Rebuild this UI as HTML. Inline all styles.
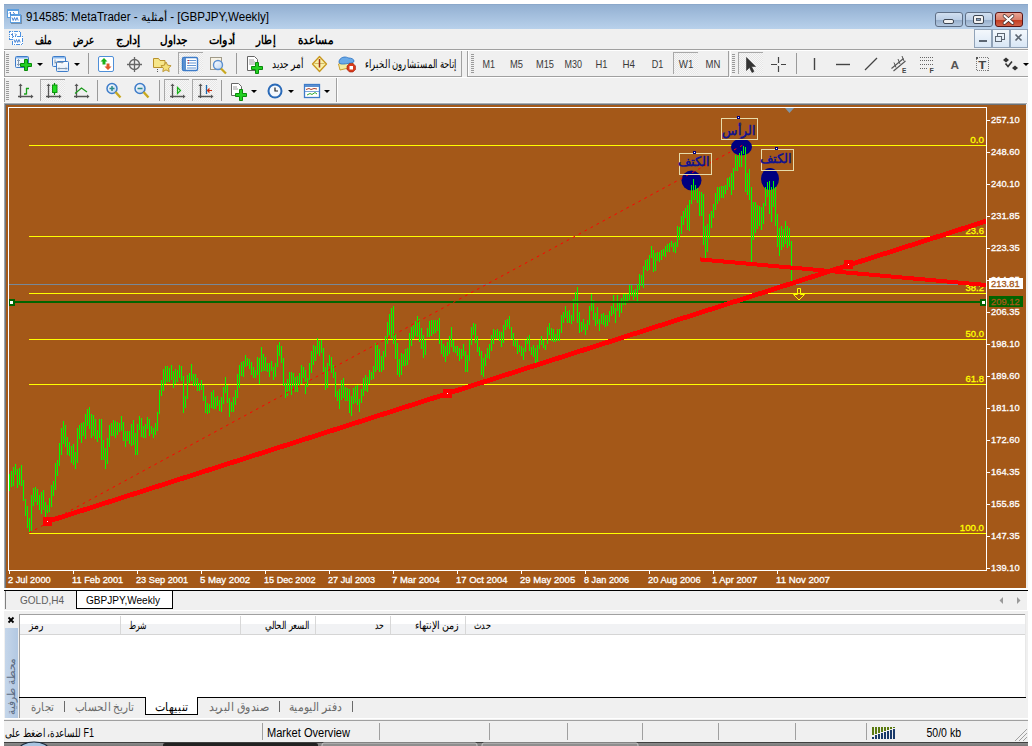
<!DOCTYPE html>
<html><head><meta charset="utf-8">
<style>
*{margin:0;padding:0;box-sizing:border-box}
html,body{width:1032px;height:746px;overflow:hidden;background:#fff;font-family:"Liberation Sans",sans-serif;font-size:12px;color:#000}
.a{position:absolute}
.t{position:absolute;white-space:nowrap;line-height:1}
#title{left:4px;top:4px;width:1024px;height:25px;background:linear-gradient(#93b0d2,#b7d0ea)}
#menu{left:4px;top:29px;width:1024px;height:20px;background:#f0f0f0}
#tb{left:4px;top:49px;width:1024px;height:54px;background:#f0f0f0;border-top:1px solid #a0a0a0}
</style></head><body>
<svg class="a" style="left:0;top:0" width="1032" height="104" viewBox="0 0 1032 104">
<defs>
<linearGradient id="gT" x1="0" y1="0" x2="0" y2="1"><stop offset="0" stop-color="#92afd1"/><stop offset="1" stop-color="#b8d1eb"/></linearGradient>
<linearGradient id="gBtn" x1="0" y1="0" x2="0" y2="1"><stop offset="0" stop-color="#d3e1f1"/><stop offset="0.5" stop-color="#bccfe6"/><stop offset="0.51" stop-color="#93acc9"/><stop offset="1" stop-color="#b6cae2"/></linearGradient>
<linearGradient id="gCls" x1="0" y1="0" x2="0" y2="1"><stop offset="0" stop-color="#eaa898"/><stop offset="0.5" stop-color="#d9806b"/><stop offset="0.51" stop-color="#c2391c"/><stop offset="1" stop-color="#d2664c"/></linearGradient>
<linearGradient id="gMdi" x1="0" y1="0" x2="0" y2="1"><stop offset="0" stop-color="#f4f8fc"/><stop offset="1" stop-color="#d8e6f5"/></linearGradient>
</defs>
<g shape-rendering="crispEdges">
<rect x="4" y="4" width="1024" height="25" fill="url(#gT)"/>
<rect x="4" y="4" width="1024" height="1" fill="#8ba8ca"/>
<rect x="4" y="29" width="1024" height="20" fill="#f0f0f0"/>
<rect x="4" y="49" width="1024" height="1" fill="#a0a0a0"/>
<rect x="4" y="50" width="1024" height="53" fill="#f0f0f0"/>
<rect x="4" y="50" width="1024" height="1" fill="#ffffff"/>
</g>
<!-- title icon -->
<g shape-rendering="crispEdges">
<rect x="7" y="9" width="12" height="9" fill="#5a9ee0"/><rect x="8" y="11" width="10" height="6" fill="#fff"/>
<rect x="10" y="14" width="11" height="9" fill="#5a9ee0"/><rect x="11" y="16" width="9" height="6" fill="#fff"/>
<rect x="11" y="23" width="11" height="1" fill="#7a90a8"/><rect x="21" y="15" width="1" height="8" fill="#7a90a8"/>
</g>
<path d="M9 13.5l1.5-1.5v3M13 12l1.5 1.5-1.5 1" stroke="#3a7ad0" stroke-width="0.9" fill="none"/>
<path d="M12 17.5l1.2 3 1.3-3 1.2 3 1.3-3 1.2 3" stroke="#3a7ad0" stroke-width="0.9" fill="none"/>
<text x="26" y="21" font-family="Liberation Sans" font-size="12" fill="#000" textLength="243" lengthAdjust="spacingAndGlyphs">914585: MetaTrader - أمثلية - [GBPJPY,Weekly]</text>
<!-- caption buttons -->
<rect x="935.5" y="12.5" width="27" height="14" rx="2.5" fill="url(#gBtn)" stroke="#5e6f86"/>
<rect x="943.5" y="19.5" width="10" height="4" rx="1.5" fill="#f2f2f2" stroke="#3d4653"/>
<rect x="965.5" y="12.5" width="27" height="14" rx="2.5" fill="url(#gBtn)" stroke="#5e6f86"/>
<rect x="973.5" y="15.5" width="10" height="8" rx="1.5" fill="#f2f2f2" stroke="#3d4653"/>
<rect x="976.5" y="18.5" width="4" height="2" fill="#8aa4c4" stroke="#3d4653" stroke-width="0.8"/>
<rect x="995.5" y="12.5" width="27" height="14" rx="2.5" fill="url(#gCls)" stroke="#5a1414"/>
<path d="M1004.5 16l8 7M1012.5 16l-8 7" stroke="#3a2a2a" stroke-width="3.6" stroke-linecap="round"/>
<path d="M1004.5 16l8 7M1012.5 16l-8 7" stroke="#fff" stroke-width="2.2" stroke-linecap="round"/>
<!-- MDI buttons -->
<g shape-rendering="crispEdges">
<rect x="974.5" y="29.5" width="17" height="18" fill="url(#gMdi)" stroke="#91a3b8"/>
<rect x="992.5" y="29.5" width="17" height="18" fill="url(#gMdi)" stroke="#91a3b8"/>
<rect x="1010.5" y="29.5" width="17" height="18" fill="url(#gMdi)" stroke="#91a3b8"/>
<rect x="979" y="40" width="8" height="2" fill="#5c6672"/>
<rect x="995.5" y="36.5" width="6" height="5" fill="none" stroke="#5c6672"/>
<path d="M997.5 36.5V33.5H1004.5V39.5H1001.5" fill="none" stroke="#5c6672"/>
</g>
<path d="M1015.5 34.5l6 6M1021.5 34.5l-6 6" stroke="#5c6672" stroke-width="1.6"/>
<!-- menu -->
<rect x="9.5" y="31.5" width="11" height="8" fill="#fff" stroke="#4a90e0" stroke-dasharray="1.5 0.8" shape-rendering="crispEdges"/>
<path d="M11 35l1.5-1.5v3M15 33.5l1.5 1.5-1.5 1" stroke="#3a7ad0" stroke-width="0.9" fill="none"/>
<rect x="12.5" y="36.5" width="10" height="8" fill="#fff" stroke="#4a90e0" stroke-dasharray="1.5 0.8" shape-rendering="crispEdges"/>
<path d="M14 39.5l1.2 3 1.3-3 1.2 3 1.3-3 1.2 3" stroke="#3a7ad0" stroke-width="0.9" fill="none"/>
<g font-family="Liberation Sans" font-size="12" font-weight="bold" fill="#000" lengthAdjust="spacingAndGlyphs">
<text x="35" y="44" textLength="16" lengthAdjust="spacingAndGlyphs">ملف</text>
<text x="73" y="44" textLength="21" lengthAdjust="spacingAndGlyphs">عرض</text>
<text x="116" y="44" textLength="24" lengthAdjust="spacingAndGlyphs">إدارج</text>
<text x="160" y="44" textLength="27" lengthAdjust="spacingAndGlyphs">جداول</text>
<text x="209" y="44" textLength="26" lengthAdjust="spacingAndGlyphs">أدوات</text>
<text x="256" y="44" textLength="19" lengthAdjust="spacingAndGlyphs">إطار</text>
<text x="298" y="44" textLength="35" lengthAdjust="spacingAndGlyphs">مساعدة</text>
</g>
<defs>
<pattern id="chk" width="2" height="2" patternUnits="userSpaceOnUse"><rect width="2" height="2" fill="#f7f7f7"/><rect width="1" height="1" fill="#e6e6e6"/><rect x="1" y="1" width="1" height="1" fill="#e6e6e6"/></pattern>
<linearGradient id="gBlueWin" x1="0" y1="0" x2="0" y2="1"><stop offset="0" stop-color="#ffffff"/><stop offset="1" stop-color="#dfeaf7"/></linearGradient>
<linearGradient id="gLens" x1="0" y1="0" x2="1" y2="1"><stop offset="0" stop-color="#ffffff"/><stop offset="1" stop-color="#bcd4ee"/></linearGradient>
</defs>
<!-- toolbar band borders -->
<g shape-rendering="crispEdges">
<!-- row 1 group 1 -->
<rect x="4" y="76" width="458" height="1" fill="#a0a0a0"/>
<rect x="461" y="51" width="1" height="26" fill="#a0a0a0"/>
<rect x="4" y="51" width="1" height="26" fill="#a0a0a0"/>
<!-- row 1 group 2 -->
<rect x="467" y="51" width="1" height="26" fill="#a0a0a0"/>
<rect x="468" y="51" width="1" height="25" fill="#ffffff"/>
<rect x="467" y="76" width="262" height="1" fill="#a0a0a0"/>
<rect x="728" y="51" width="1" height="26" fill="#a0a0a0"/>
<!-- row 1 group 3 -->
<rect x="730" y="51" width="1" height="25" fill="#ffffff"/>
<rect x="730" y="76" width="298" height="1" fill="#a0a0a0"/>
<rect x="4" y="77" width="1024" height="1" fill="#ffffff"/>
<!-- row 2 -->
<rect x="4" y="78" width="1" height="24" fill="#a0a0a0"/>
<rect x="336" y="78" width="1" height="24" fill="#a0a0a0"/>
<rect x="337" y="78" width="1" height="24" fill="#ffffff"/>
<rect x="4" y="102" width="1024" height="1" fill="#f6f6f6"/>
<!-- grips -->
<g fill="#9a9a9a">
<rect x="6" y="54" width="3" height="1"/><rect x="6" y="56" width="3" height="1"/><rect x="6" y="58" width="3" height="1"/><rect x="6" y="60" width="3" height="1"/><rect x="6" y="62" width="3" height="1"/><rect x="6" y="64" width="3" height="1"/><rect x="6" y="66" width="3" height="1"/><rect x="6" y="68" width="3" height="1"/><rect x="6" y="70" width="3" height="1"/><rect x="6" y="72" width="3" height="1"/>
<rect x="471" y="54" width="3" height="1"/><rect x="471" y="56" width="3" height="1"/><rect x="471" y="58" width="3" height="1"/><rect x="471" y="60" width="3" height="1"/><rect x="471" y="62" width="3" height="1"/><rect x="471" y="64" width="3" height="1"/><rect x="471" y="66" width="3" height="1"/><rect x="471" y="68" width="3" height="1"/><rect x="471" y="70" width="3" height="1"/><rect x="471" y="72" width="3" height="1"/>
<rect x="732" y="54" width="3" height="1"/><rect x="732" y="56" width="3" height="1"/><rect x="732" y="58" width="3" height="1"/><rect x="732" y="60" width="3" height="1"/><rect x="732" y="62" width="3" height="1"/><rect x="732" y="64" width="3" height="1"/><rect x="732" y="66" width="3" height="1"/><rect x="732" y="68" width="3" height="1"/><rect x="732" y="70" width="3" height="1"/><rect x="732" y="72" width="3" height="1"/>
<rect x="6" y="81" width="3" height="1"/><rect x="6" y="83" width="3" height="1"/><rect x="6" y="85" width="3" height="1"/><rect x="6" y="87" width="3" height="1"/><rect x="6" y="89" width="3" height="1"/><rect x="6" y="91" width="3" height="1"/><rect x="6" y="93" width="3" height="1"/><rect x="6" y="95" width="3" height="1"/><rect x="6" y="97" width="3" height="1"/><rect x="6" y="99" width="3" height="1"/>
</g>
<!-- separators -->
<g fill="#9a9a9a">
<rect x="88" y="53" width="1" height="21"/>
<rect x="236" y="53" width="1" height="21"/>
<rect x="796" y="53" width="1" height="21"/>
<rect x="97" y="80" width="1" height="21"/>
<rect x="159" y="80" width="1" height="21"/>
<rect x="221" y="80" width="1" height="21"/>
</g>
<!-- pressed boxes -->
<rect x="178" y="52" width="25" height="22" fill="url(#chk)"/><rect x="178" y="52" width="25" height="1" fill="#a8a8a8"/><rect x="178" y="52" width="1" height="22" fill="#a8a8a8"/>
<rect x="673" y="52" width="25" height="22" fill="url(#chk)"/><rect x="673" y="52" width="25" height="1" fill="#a8a8a8"/><rect x="673" y="52" width="1" height="22" fill="#a8a8a8"/>
<rect x="738" y="52" width="25" height="22" fill="url(#chk)"/><rect x="738" y="52" width="25" height="1" fill="#a8a8a8"/><rect x="738" y="52" width="1" height="22" fill="#a8a8a8"/>
<rect x="40" y="79" width="25" height="22" fill="url(#chk)"/><rect x="40" y="79" width="25" height="1" fill="#a8a8a8"/><rect x="40" y="79" width="1" height="22" fill="#a8a8a8"/>
<rect x="164" y="79" width="25" height="22" fill="url(#chk)"/><rect x="164" y="79" width="25" height="1" fill="#a8a8a8"/><rect x="164" y="79" width="1" height="22" fill="#a8a8a8"/>
<rect x="192" y="79" width="25" height="22" fill="url(#chk)"/><rect x="192" y="79" width="25" height="1" fill="#a8a8a8"/><rect x="192" y="79" width="1" height="22" fill="#a8a8a8"/>
</g>
<!-- dropdown arrows -->
<g fill="#000">
<path d="M37 63h6l-3 3z"/><path d="M74 63h6l-3 3z"/>
<path d="M251 90h6l-3 3z"/><path d="M288 90h6l-3 3z"/><path d="M324 90h6l-3 3z"/>
<path d="M1023 63h6l-3 3z"/>
</g>
<!-- ROW1 icons -->
<!-- new chart -->
<rect x="15.5" y="56.5" width="13" height="11" rx="1" fill="url(#gBlueWin)" stroke="#3d7cc9"/>
<rect x="16" y="57" width="12" height="1.5" fill="#8ab8ec"/>
<path d="M18.5 59.5v6M17 61l1.5-1.5 1.5 1.5M17 64l1.5 1.5 1.5-1.5" stroke="#7890a8" stroke-width="0.9" fill="none"/>
<path d="M24.5 59.5h3v4h4v3h-4v4h-3v-4h-4v-3h4z" fill="#22d022" stroke="#0a8a0a"/>
<!-- profiles -->
<rect x="52.5" y="56.5" width="13" height="10" rx="1" fill="url(#gBlueWin)" stroke="#3d7cc9"/>
<rect x="53" y="57" width="12" height="1.5" fill="#8ab8ec"/>
<rect x="56.5" y="61.5" width="12" height="10" rx="1" fill="url(#gBlueWin)" stroke="#3d7cc9"/>
<path d="M55 59.5v4M55 62.5h8M62 61.5l1 1-1 1" stroke="#7890a8" stroke-width="0.9" fill="none"/>
<path d="M58 68.5h9M59 67.5l-1 1 1 1M66 67.5l1 1-1 1" stroke="#7890a8" stroke-width="0.9" fill="none"/>
<!-- market watch -->
<rect x="98.5" y="56.5" width="15" height="15" rx="1.5" fill="#fff" stroke="#4f8fd8"/>
<path d="M104 58l3.5 3.5h-2v3h-3v-3h-2z" fill="#1ab01a"/>
<path d="M108 70l-3.5-3.5h2v-3h3v3h2z" fill="#e0562a"/>
<!-- data window crosshair -->
<circle cx="134.5" cy="64.5" r="5" fill="none" stroke="#666" stroke-width="1.3"/>
<path d="M134.5 57v15M127 64.5h15" stroke="#666" stroke-width="1.3"/>
<!-- folder star -->
<path d="M153.5 58.5h5l1.5 2h5v7h-11.5z" fill="#f6e68a" stroke="#b8902a"/>
<path d="M166 62l1.6 3.2 3.5.5-2.5 2.4.6 3.5-3.2-1.7-3.2 1.7.6-3.5-2.5-2.4 3.5-.5z" fill="#f4e07a" stroke="#b8902a" stroke-width="0.9"/>
<path d="M157.5 69v4" stroke="#555" stroke-dasharray="1 1"/>
<!-- navigator -->
<rect x="182.5" y="57.5" width="15" height="13" rx="1.5" fill="#fff" stroke="#3d7cc9" stroke-width="1.4"/>
<rect x="183" y="58" width="3" height="12" fill="#5a8fd0"/>
<path d="M187 60.5h9M187 63h9M187 65.5h9M187 68h9" stroke="#3d7cc9" stroke-width="0.8"/>
<path d="M188 60.5h1M188 63h1" stroke="#e02020"/>
<!-- tester -->
<rect x="210.5" y="57.5" width="11" height="12" fill="#f7f2e4" stroke="#a09a88"/>
<circle cx="218" cy="65" r="4.5" fill="url(#gLens)" stroke="#5a8fd0" stroke-width="1.4"/>
<path d="M221 68.5l5 5" stroke="#c8a820" stroke-width="2.2"/>
<!-- new order -->
<path d="M247.5 56.5h7l3 3v11h-10z" fill="#fff" stroke="#666"/>
<path d="M249 60h5M249 62h6M249 64h6" stroke="#888" stroke-width="0.8"/>
<path d="M255.5 62.5h3v4h4v3h-4v4h-3v-4h-4v-3h4z" fill="#22d022" stroke="#0a8a0a"/>
<!-- metaeditor diamond -->
<path d="M319.5 56.5l7 7.5-7 7.5-7-7.5z" fill="#f7f0a8" stroke="#c8961e" stroke-width="1.3" stroke-linejoin="round"/>
<path d="M314.5 63.5h10" stroke="#c8a850" stroke-width="0.8"/>
<path d="M319.5 59v8.5" stroke="#a03418" stroke-width="1.5"/>
<!-- experts -->
<path d="M340 70l-1.5-6 8-3.5 6.5 2.5v4z" fill="#f4eda0" stroke="#c8961e" stroke-width="0.9" stroke-linejoin="round"/>
<path d="M339 62c0-3 3-5 6-5 2 0 3 1 4 1 2 0 5 1 5 3 0 2-3 2-6 2.5-3 .5-9 1.5-9-1.5z" fill="#6aaae8" stroke="#2a70c0" stroke-width="0.8"/>
<path d="M349.5 63.5h3.5l2.5 2.5v3.5l-2.5 2.5h-3.5l-2.5-2.5v-3.5z" fill="#d83a1a" stroke="#a02010" stroke-width="0.6"/>
<rect x="349.5" y="66" width="3.5" height="3.5" fill="#fff"/>
<!-- row1 texts -->
<g font-family="Liberation Sans" font-size="11.5" fill="#000">
<text x="272" y="68" textLength="31" lengthAdjust="spacingAndGlyphs">أمر جديد</text>
<text x="365" y="68" textLength="91" lengthAdjust="spacingAndGlyphs">إتاحة المستشارون الخبراء</text>
</g>
<g font-family="Liberation Sans" font-size="11" fill="#3a3a3a">
<text x="482.5" y="68" textLength="12.5" lengthAdjust="spacingAndGlyphs">M1</text>
<text x="510" y="68" textLength="13" lengthAdjust="spacingAndGlyphs">M5</text>
<text x="536" y="68" textLength="18" lengthAdjust="spacingAndGlyphs">M15</text>
<text x="564.5" y="68" textLength="17.5" lengthAdjust="spacingAndGlyphs">M30</text>
<text x="595.5" y="68" textLength="12" lengthAdjust="spacingAndGlyphs">H1</text>
<text x="622.5" y="68" textLength="12.5" lengthAdjust="spacingAndGlyphs">H4</text>
<text x="651.8" y="68" textLength="11.6" lengthAdjust="spacingAndGlyphs">D1</text>
<text x="678.8" y="68" textLength="14.6" lengthAdjust="spacingAndGlyphs">W1</text>
<text x="705.6" y="68" textLength="14.8" lengthAdjust="spacingAndGlyphs">MN</text>
</g>
<!-- group 3 icons -->
<path d="M746.5 57.5v13l3-3 2.5 5 2-1-2.5-5h4z" fill="#333" stroke="#333" stroke-width="0.6" stroke-linejoin="round"/>
<path d="M778.5 57v15M771 64.5h15" stroke="#444" stroke-width="1.2"/>
<rect x="778" y="63" width="2" height="3" fill="#f0f0f0"/><rect x="777" y="64" width="4" height="1" fill="#f0f0f0"/>
<path d="M814.5 58v12" stroke="#444" stroke-width="1.4"/>
<path d="M836 64.5h14" stroke="#444" stroke-width="1.4"/>
<path d="M865 70l12-12" stroke="#444" stroke-width="1.2"/>
<path d="M891.5 68.5l12-10M893.5 71l12-10" stroke="#555" stroke-width="1.1" fill="none"/>
<path d="M894 62.5l2 5M898 59l2 5M902 56l2 5" stroke="#555" stroke-width="1" fill="none"/>
<text x="902" y="72.5" font-family="Liberation Sans" font-size="6.5" font-weight="bold" fill="#444">E</text>
<g fill="#666" shape-rendering="crispEdges">
<rect x="920" y="57" width="1" height="1"/><rect x="922" y="57" width="1" height="1"/><rect x="924" y="57" width="1" height="1"/><rect x="926" y="57" width="1" height="1"/><rect x="928" y="57" width="1" height="1"/><rect x="930" y="57" width="1" height="1"/><rect x="932" y="57" width="1" height="1"/>
<rect x="920" y="60" width="1" height="1"/><rect x="922" y="60" width="1" height="1"/><rect x="924" y="60" width="1" height="1"/><rect x="926" y="60" width="1" height="1"/><rect x="928" y="60" width="1" height="1"/><rect x="930" y="60" width="1" height="1"/><rect x="932" y="60" width="1" height="1"/>
<rect x="920" y="64" width="1" height="1"/><rect x="922" y="64" width="1" height="1"/><rect x="924" y="64" width="1" height="1"/><rect x="926" y="64" width="1" height="1"/><rect x="928" y="64" width="1" height="1"/><rect x="930" y="64" width="1" height="1"/><rect x="932" y="64" width="1" height="1"/>
<rect x="920" y="68" width="1" height="1"/><rect x="922" y="68" width="1" height="1"/><rect x="924" y="68" width="1" height="1"/><rect x="926" y="68" width="1" height="1"/>
</g>
<text x="929.5" y="72.5" font-family="Liberation Sans" font-size="7" font-weight="bold" fill="#444">F</text>
<text x="950.5" y="68.7" font-family="Liberation Sans" font-size="11" font-weight="bold" fill="#555" textLength="8.5" lengthAdjust="spacingAndGlyphs">A</text>
<rect x="976.5" y="57.5" width="12" height="13" fill="none" stroke="#777" stroke-dasharray="1 1" shape-rendering="crispEdges"/>
<rect x="975.5" y="56.5" width="2" height="2" fill="#555" shape-rendering="crispEdges"/>
<text x="978.3" y="68.7" font-family="Liberation Sans" font-size="11" font-weight="bold" fill="#444" textLength="8" lengthAdjust="spacingAndGlyphs">T</text>
<path d="M1006 57.5l3 2.5-3 2.5-3-2.5z" fill="#333"/>
<path d="M1015 65.5l3 2.5-3 2.5-3-2.5z" fill="#333"/>
<path d="M1005.5 63.5l2.5 3 4-5" stroke="#333" stroke-width="1.6" fill="none"/>
<!-- ROW2 icons -->
<g stroke="#555" stroke-width="1.3" fill="none">
<path d="M20.5 85v13M18 96.5h14"/><path d="M48.5 85v13M46 96.5h14"/><path d="M76.5 85v13M74 96.5h14"/>
<path d="M172.5 85v13M170 96.5h14"/><path d="M200.5 85v13M198 96.5h14"/>
</g>
<g fill="#555"><path d="M18.5 86l2-2.5 2 2.5z"/><path d="M31 94.5l2.5 2-2.5 2z"/><path d="M46.5 86l2-2.5 2 2.5z"/><path d="M59 94.5l2.5 2-2.5 2z"/><path d="M74.5 86l2-2.5 2 2.5z"/><path d="M87 94.5l2.5 2-2.5 2z"/><path d="M170.5 86l2-2.5 2 2.5z"/><path d="M183 94.5l2.5 2-2.5 2z"/><path d="M198.5 86l2-2.5 2 2.5z"/><path d="M211 94.5l2.5 2-2.5 2z"/></g>
<path d="M26.5 88v6.5M26 88.5h3M24 94h2.5" stroke="#18a018" stroke-width="1.3" fill="none"/>
<path d="M54.5 83v12" stroke="#0a8a0a" stroke-width="1.2"/><rect x="52.5" y="85" width="4.5" height="7.5" fill="#22dd22" stroke="#0a8a0a" stroke-width="0.9"/>
<path d="M75 93.5l6.5-5.5 5.5 4" stroke="#1a9a1a" stroke-width="1.2" fill="none"/>
<circle cx="112" cy="88.5" r="5" fill="url(#gLens)" stroke="#3d7cc9" stroke-width="1.5"/>
<path d="M109.5 88.5h5M112 86v5" stroke="#2a8a8a" stroke-width="1.5"/>
<path d="M115.5 92l5 5.5" stroke="#c8a820" stroke-width="2.4"/>
<circle cx="140" cy="88.5" r="5" fill="url(#gLens)" stroke="#3d7cc9" stroke-width="1.5"/>
<path d="M137.5 88.5h5" stroke="#2a8a8a" stroke-width="1.5"/>
<path d="M143.5 92l5 5.5" stroke="#c8a820" stroke-width="2.4"/>
<path d="M177.5 87.5l3 3-3 3z" fill="none" stroke="#1ab01a" stroke-width="1.2"/>
<path d="M206.5 85v9" stroke="#1a6ab0" stroke-width="1.3"/><path d="M212 90.5h-4M209.5 88.5l-2 2 2 2" stroke="#d03010" stroke-width="1.2" fill="none"/>
<path d="M231.5 83.5h7l3 3v9h-10z" fill="#fff" stroke="#666"/>
<path d="M233 87h4M233 89h5" stroke="#888" stroke-width="0.8"/>
<path d="M239.5 89.5h3v4h4v3h-4v4h-3v-4h-4v-3h4z" fill="#22d022" stroke="#0a8a0a"/>
<circle cx="275" cy="91" r="7.5" fill="#2a6ab8"/><circle cx="275" cy="91" r="5.5" fill="#f4f8fc"/>
<path d="M275 87.5v3.5h3" stroke="#222" stroke-width="1.2" fill="none"/>
<rect x="304.5" y="84.5" width="15" height="13" fill="#fff" stroke="#3d7cc9" stroke-width="1.3"/>
<rect x="305" y="85" width="14" height="2" fill="#5a8fd0"/>
<path d="M305 91.5h14" stroke="#5a8fd0" stroke-width="0.8"/>
<path d="M306 89.5l3-1 2 1 3-1 3 .5" stroke="#a02a10" stroke-width="0.9" fill="none"/>
<path d="M307 95l3-1.5 2 1 3-2 2 1.5" stroke="#18a018" stroke-width="0.9" fill="none"/>

</svg>

<svg class="a" style="left:0;top:0" width="1032" height="746" viewBox="0 0 1032 746">
<style>
.pl{font-family:"Liberation Sans",sans-serif;font-size:9.5px;fill:#fff;stroke:#fff;stroke-width:0.3px}
.dl{font-family:"Liberation Sans",sans-serif;font-size:9.5px;fill:#fff;stroke:#fff;stroke-width:0.3px}
.fl{font-family:"Liberation Sans",sans-serif;font-size:9.5px;fill:#ffff00;stroke:#ffff00;stroke-width:0.3px;text-anchor:end}
</style>
<defs><clipPath id="fr"><rect x="9" y="108" width="977" height="462"/></clipPath></defs>
<g shape-rendering="crispEdges">
<rect x="4" y="104" width="1022" height="484" fill="#a45818"/>
<rect x="4" y="103" width="1023" height="1" fill="#a9adb1"/>
<rect x="4" y="104" width="1023" height="1" fill="#6b7177"/>
<rect x="4" y="104" width="1" height="484" fill="#a0a5aa"/>
<rect x="5" y="105" width="1" height="483" fill="#6e767e"/>
<rect x="1026" y="104" width="2" height="484" fill="#f0f0f0"/>
<rect x="8.5" y="107.5" width="978" height="463" fill="none" stroke="#fff"/>
<g fill="#ffff00">
<rect x="29" y="145" width="957" height="1"/>
<rect x="29" y="236" width="957" height="1"/>
<rect x="29" y="293" width="957" height="1"/>
<rect x="29" y="339" width="957" height="1"/>
<rect x="29" y="384" width="957" height="1"/>
<rect x="29" y="533" width="957" height="1"/>
</g>
</g>
<g fill="#000080">
<ellipse cx="691.5" cy="180.5" rx="10" ry="10"/>
<ellipse cx="741.5" cy="147" rx="10.5" ry="8.5"/>
<ellipse cx="770" cy="179" rx="9" ry="11"/>
</g>
<g shape-rendering="crispEdges">
<rect x="9" y="284" width="977" height="1" fill="#778899"/>
<path d="M9.5 474V491M11.5 471V487M13.5 467V486M15.5 464V475M17.5 469V488M19.5 468V485M21.5 465V486M23.5 480V501M25.5 499V516M27.5 506V528M29.5 518V533M31.5 495V531M33.5 488V506M35.5 487V502M37.5 489V505M39.5 495V510M41.5 492V514M43.5 490V510M45.5 502V517M47.5 505V513M49.5 498V512M51.5 485V507M53.5 481V496M55.5 463V490M57.5 460V476M59.5 443V466M61.5 428V455M63.5 421V444M65.5 425V447M67.5 437V455M69.5 442V456M71.5 446V463M73.5 444V465M75.5 452V469M77.5 428V463M79.5 425V439M81.5 423V443M83.5 422V436M85.5 414V439M87.5 409V426M89.5 407V429M91.5 414V438M93.5 415V436M95.5 419V439M97.5 430V442M99.5 419V438M101.5 419V460M103.5 440V460M105.5 448V469M107.5 438V464M109.5 425V447M111.5 423V436M113.5 420V436M115.5 421V438M117.5 422V435M119.5 423V432M121.5 416V431M123.5 422V441M125.5 431V447M127.5 431V441M129.5 431V444M131.5 424V446M133.5 420V445M135.5 433V455M137.5 424V455M139.5 416V430M141.5 418V437M143.5 426V438M145.5 424V438M147.5 417V429M149.5 419V436M151.5 426V434M153.5 428V438M155.5 423V435M157.5 412V431M159.5 390V414M161.5 380V396M163.5 369V391M165.5 366V384M167.5 366V382M169.5 368V382M171.5 365V380M173.5 371V388M175.5 369V384M177.5 370V382M179.5 365V378M181.5 366V381M183.5 376V413M185.5 396V408M187.5 375V399M189.5 373V383M191.5 364V381M193.5 374V386M195.5 374V386M197.5 378V391M199.5 383V391M201.5 380V390M203.5 385V401M205.5 396V413M207.5 403V414M209.5 404V413M211.5 392V408M213.5 390V409M215.5 397V409M217.5 396V406M219.5 400V411M221.5 397V412M223.5 387V404M225.5 377V393M227.5 385V403M229.5 398V417M231.5 402V412M233.5 397V412M235.5 390V405M237.5 374V398M239.5 365V388M241.5 362V376M243.5 361V377M245.5 355V367M247.5 358V366M249.5 359V369M251.5 362V375M253.5 367V378M255.5 370V378M257.5 357V375M259.5 358V384M261.5 347V372M263.5 354V371M265.5 357V371M267.5 363V372M269.5 363V377M271.5 361V371M273.5 367V380M275.5 363V377M277.5 345V367M279.5 342V356M281.5 346V363M283.5 358V386M285.5 383V398M287.5 379V396M289.5 372V391M291.5 372V395M293.5 373V386M295.5 377V392M297.5 376V392M299.5 373V387M301.5 365V384M303.5 367V378M305.5 370V394M307.5 378V387M309.5 363V380M311.5 351V373M313.5 345V365M315.5 346V361M317.5 338V354M319.5 341V356M321.5 340V353M323.5 348V372M325.5 367V390M327.5 363V388M329.5 355V366M331.5 357V373M333.5 365V378M335.5 372V397M337.5 391V401M339.5 389V409M341.5 380V400M343.5 378V398M345.5 387V401M347.5 388V401M349.5 389V413M351.5 396V416M353.5 388V404M355.5 386V403M357.5 385V405M359.5 399V412M361.5 389V403M363.5 378V396M365.5 375V391M367.5 377V392M369.5 370V384M371.5 372V380M373.5 366V379M375.5 343V372M377.5 345V370M379.5 349V372M381.5 356V372M383.5 351V370M385.5 336V357M387.5 322V344M389.5 314V335M391.5 308V338M393.5 306V344M395.5 333V359M397.5 343V375M399.5 359V377M401.5 353V375M403.5 354V366M405.5 349V366M407.5 348V365M409.5 333V360M411.5 327V346M413.5 325V339M415.5 321V336M417.5 316V337M419.5 319V342M421.5 328V349M423.5 335V358M425.5 340V355M427.5 328V337M429.5 321V337M431.5 320V336M433.5 320V334M435.5 320V333M437.5 320V331M439.5 318V344M441.5 340V354M443.5 344V357M445.5 346V362M447.5 342V356M449.5 336V354M451.5 327V347M453.5 340V352M455.5 346V353M457.5 346V356M459.5 348V361M461.5 349V359M463.5 344V356M465.5 351V372M467.5 355V372M469.5 340V361M471.5 327V345M473.5 323V335M475.5 324V343M477.5 336V352M479.5 347V356M481.5 351V375M483.5 358V377M485.5 354V366M487.5 348V358M489.5 344V359M491.5 335V351M493.5 329V344M495.5 330V338M497.5 329V339M499.5 331V341M501.5 332V347M503.5 325V343M505.5 320V330M507.5 319V327M509.5 316V329M511.5 327V339M513.5 333V346M515.5 340V347M517.5 340V354M519.5 345V352M521.5 346V356M523.5 348V360M525.5 340V352M527.5 337V344M529.5 335V351M531.5 347V355M533.5 345V357M535.5 348V363M537.5 345V362M539.5 340V349M541.5 336V345M543.5 340V348M545.5 345V350M547.5 327V344M549.5 323V335M551.5 328V341M553.5 329V342M555.5 334V342M557.5 329V341M559.5 329V341M561.5 315V333M563.5 312V323M565.5 306V318M567.5 311V323M569.5 310V323M571.5 315V324M573.5 299V321M575.5 292V304M577.5 287V323M579.5 312V333M581.5 322V332M583.5 319V330M585.5 324V335M587.5 320V330M589.5 306V325M591.5 294V311M593.5 300V320M595.5 313V326M597.5 307V324M599.5 319V331M601.5 314V324M603.5 313V325M605.5 315V327M607.5 315V326M609.5 311V322M611.5 306V316M613.5 295V314M615.5 308V323M617.5 295V311M619.5 302V317M621.5 298V313M623.5 294V305M625.5 294V305M627.5 294V301M629.5 285V300M631.5 285V296M633.5 290V300M635.5 289V297M637.5 284V301M639.5 274V290M641.5 275V286M643.5 266V288M645.5 260V270M647.5 259V271M649.5 255V270M651.5 246V258M653.5 250V272M655.5 253V271M657.5 252V261M659.5 252V262M661.5 250V260M663.5 249V256M665.5 246V257M667.5 244V252M669.5 243V252M671.5 241V247M673.5 243V252M675.5 242V253M677.5 226V247M679.5 227V240M681.5 216V234M683.5 211V225M685.5 208V218M687.5 205V230M689.5 200V231M691.5 185V204M693.5 179V200M695.5 185V200M697.5 188V203M699.5 191V216M701.5 192V216M703.5 194V245M705.5 226V258M707.5 224V252M709.5 214V239M711.5 211V228M713.5 204V218M715.5 193V210M717.5 187V204M719.5 187V201M721.5 186V198M723.5 186V198M725.5 185V194M727.5 178V190M729.5 177V187M731.5 173V195M733.5 168V190M735.5 155V171M737.5 156V171M739.5 153V167M741.5 151V167M743.5 146V154M745.5 147V192M747.5 173V195M749.5 169V200M751.5 187V262M753.5 202V240M755.5 202V233M757.5 205V229M759.5 206V226M761.5 207V230M763.5 203V224M765.5 187V206M767.5 182V197M769.5 181V214M771.5 187V222M773.5 181V207M775.5 187V226M777.5 214V247M779.5 228V256M781.5 226V250M783.5 229V247M785.5 221V244M787.5 226V248M789.5 228V246M791.5 241V286" stroke="#00ff00" stroke-width="1" fill="none"/>
<rect x="9" y="301" width="977" height="2" fill="#006400"/>
<rect x="9" y="299" width="6" height="7" fill="#006400"/><rect x="10" y="301" width="3" height="3" fill="#fff"/>
<rect x="980" y="299" width="6" height="7" fill="#006400"/><rect x="982" y="301" width="3" height="3" fill="#fff"/>
</g>
<g>
<text x="984" y="143" class="fl" textLength="13.8" lengthAdjust="spacingAndGlyphs">0.0</text>
<text x="984" y="234" class="fl" textLength="18.4" lengthAdjust="spacingAndGlyphs">23.6</text>
<text x="984" y="291" class="fl" textLength="18.4" lengthAdjust="spacingAndGlyphs">38.2</text>
<text x="984" y="337" class="fl" textLength="18.4" lengthAdjust="spacingAndGlyphs">50.0</text>
<text x="984" y="382" class="fl" textLength="18.4" lengthAdjust="spacingAndGlyphs">61.8</text>
<text x="984" y="531" class="fl" textLength="24.2" lengthAdjust="spacingAndGlyphs">100.0</text>
</g>
<g clip-path="url(#fr)">
<line x1="29" y1="533" x2="743" y2="145" stroke="#ff0000" stroke-width="1" stroke-dasharray="2.6 4.2"/>
<line x1="47" y1="521.7" x2="1000" y2="216.7" stroke="#ff0000" stroke-width="4.8" shape-rendering="crispEdges"/>
<line x1="700" y1="259.4" x2="986" y2="285" stroke="#ff0000" stroke-width="4" shape-rendering="crispEdges"/>
</g>
<g shape-rendering="crispEdges">
<rect x="43" y="517" width="9" height="9" fill="#ff0000"/><rect x="47" y="521" width="1" height="1" fill="#fff"/>
<rect x="443" y="389" width="9" height="9" fill="#ff0000"/><rect x="447" y="393" width="1" height="1" fill="#fff"/>
<rect x="844" y="260" width="9" height="9" fill="#ff0000"/><rect x="848" y="264" width="1" height="1" fill="#fff"/>
</g>
<g shape-rendering="crispEdges" fill="none" stroke="#e8dcaa">
<rect x="679.5" y="153.5" width="32" height="21"/>
<rect x="721.5" y="118.5" width="36" height="21"/>
<rect x="761.5" y="149.5" width="32" height="21"/>
</g>
<g font-family="Liberation Sans" font-size="13" font-weight="bold" fill="#14148c">
<text x="678" y="166" textLength="32" lengthAdjust="spacingAndGlyphs">الكتف</text>
<text x="722" y="135" textLength="34" lengthAdjust="spacingAndGlyphs">الرأس</text>
<text x="760" y="163" textLength="32" lengthAdjust="spacingAndGlyphs">الكتف</text>
</g>
<g shape-rendering="crispEdges">
<rect x="693" y="151" width="3" height="3" fill="#000080"/><rect x="694" y="152" width="1" height="1" fill="#fff"/>
<rect x="737" y="116" width="3" height="3" fill="#000080"/><rect x="738" y="117" width="1" height="1" fill="#fff"/>
<rect x="775" y="147" width="3" height="3" fill="#000080"/><rect x="776" y="148" width="1" height="1" fill="#fff"/>
</g>
<path d="M797.5 288.5H800.5V294.5H804.5L799 300L793.5 294.5H797.5Z" fill="none" stroke="#ffff00" stroke-width="1"/>
<path d="M785 108H794L789.5 113Z" fill="#7f96aa"/>

<path d="M987 120.5H990M987 152.5H990M987 184.5H990M987 216.5H990M987 248.5H990M987 280.5H990M987 312.5H990M987 344.5H990M987 376.5H990M987 408.5H990M987 440.5H990M987 472.5H990M987 504.5H990M987 536.5H990M987 568.5H990M9.5 571V574M73.5 571V574M137.5 571V574M201.5 571V574M265.5 571V574M329.5 571V574M393.5 571V574M457.5 571V574M521.5 571V574M585.5 571V574M649.5 571V574M713.5 571V574M777.5 571V574" stroke="#fff" stroke-width="1" fill="none"/>
<text x="991" y="123" class="pl" textLength="28.6" lengthAdjust="spacingAndGlyphs">257.10</text>
<text x="991" y="155" class="pl" textLength="28.6" lengthAdjust="spacingAndGlyphs">248.60</text>
<text x="991" y="187" class="pl" textLength="28.6" lengthAdjust="spacingAndGlyphs">240.10</text>
<text x="991" y="219" class="pl" textLength="28.6" lengthAdjust="spacingAndGlyphs">231.85</text>
<text x="991" y="251" class="pl" textLength="28.6" lengthAdjust="spacingAndGlyphs">223.35</text>
<text x="991" y="283" class="pl" textLength="28.6" lengthAdjust="spacingAndGlyphs">214.85</text>
<text x="991" y="315" class="pl" textLength="28.6" lengthAdjust="spacingAndGlyphs">206.35</text>
<text x="991" y="347" class="pl" textLength="28.6" lengthAdjust="spacingAndGlyphs">198.10</text>
<text x="991" y="379" class="pl" textLength="28.6" lengthAdjust="spacingAndGlyphs">189.60</text>
<text x="991" y="411" class="pl" textLength="28.6" lengthAdjust="spacingAndGlyphs">181.10</text>
<text x="991" y="443" class="pl" textLength="28.6" lengthAdjust="spacingAndGlyphs">172.60</text>
<text x="991" y="475" class="pl" textLength="28.6" lengthAdjust="spacingAndGlyphs">164.35</text>
<text x="991" y="507" class="pl" textLength="28.6" lengthAdjust="spacingAndGlyphs">155.85</text>
<text x="991" y="539" class="pl" textLength="28.6" lengthAdjust="spacingAndGlyphs">147.35</text>
<text x="991" y="571" class="pl" textLength="28.6" lengthAdjust="spacingAndGlyphs">139.10</text>
<text x="8" y="582.5" class="dl" textLength="42.7" lengthAdjust="spacingAndGlyphs">2 Jul 2000</text>
<text x="72" y="582.5" class="dl" textLength="51.2" lengthAdjust="spacingAndGlyphs">11 Feb 2001</text>
<text x="136" y="582.5" class="dl" textLength="52.2" lengthAdjust="spacingAndGlyphs">23 Sep 2001</text>
<text x="200" y="582.5" class="dl" textLength="50.2" lengthAdjust="spacingAndGlyphs">5 May 2002</text>
<text x="264" y="582.5" class="dl" textLength="51.6" lengthAdjust="spacingAndGlyphs">15 Dec 2002</text>
<text x="328" y="582.5" class="dl" textLength="47.2" lengthAdjust="spacingAndGlyphs">27 Jul 2003</text>
<text x="392" y="582.5" class="dl" textLength="47.800000000000004" lengthAdjust="spacingAndGlyphs">7 Mar 2004</text>
<text x="456" y="582.5" class="dl" textLength="51.5" lengthAdjust="spacingAndGlyphs">17 Oct 2004</text>
<text x="520" y="582.5" class="dl" textLength="55.2" lengthAdjust="spacingAndGlyphs">29 May 2005</text>
<text x="584" y="582.5" class="dl" textLength="45.2" lengthAdjust="spacingAndGlyphs">8 Jan 2006</text>
<text x="648" y="582.5" class="dl" textLength="52.800000000000004" lengthAdjust="spacingAndGlyphs">20 Aug 2006</text>
<text x="712" y="582.5" class="dl" textLength="45.2" lengthAdjust="spacingAndGlyphs">1 Apr 2007</text>
<text x="776" y="582.5" class="dl" textLength="53.900000000000006" lengthAdjust="spacingAndGlyphs">11 Nov 2007</text>

<g shape-rendering="crispEdges">
<rect x="989" y="278" width="34" height="11" fill="#fff"/>
<rect x="989" y="296" width="34" height="11" fill="#006400"/>
</g>
<text x="991" y="287" class="pl" style="fill:#a45818;stroke:#a45818" textLength="28.6" lengthAdjust="spacingAndGlyphs">213.81</text>
<text x="991" y="305" class="pl" style="fill:#a45818;stroke:#a45818" textLength="28.6" lengthAdjust="spacingAndGlyphs">209.12</text>
</svg>

<svg class="a" style="left:0;top:588px" width="1032" height="158" viewBox="0 588 1032 158">
<defs>
<linearGradient id="gSide" x1="0" y1="0" x2="1" y2="0"><stop offset="0" stop-color="#c5d6ea"/><stop offset="1" stop-color="#b2c8e2"/></linearGradient>
<linearGradient id="gTask" x1="0" y1="0" x2="0" y2="1"><stop offset="0" stop-color="#5a5a5a"/><stop offset="0.3" stop-color="#8a8a8a"/><stop offset="1" stop-color="#777"/></linearGradient>
</defs>
<g shape-rendering="crispEdges">
<rect x="4" y="588" width="1024" height="2" fill="#ffffff"/>
<rect x="4" y="590" width="1024" height="1" fill="#000"/>
<rect x="4" y="591" width="1023" height="19" fill="#f0f0f0"/>
<rect x="4" y="610" width="1024" height="1" fill="#ffffff"/>
<rect x="4" y="611" width="1024" height="131" fill="#f0f0f0"/>
<!-- inactive tab left border -->
<rect x="5" y="591" width="1" height="18" fill="#808080"/>
<!-- active tab -->
<rect x="76" y="590" width="97" height="19" fill="#000"/>
<rect x="77" y="591" width="95" height="17" fill="#ffffff"/>
</g>
<path d="M1003 597v7l-3.5-3.5z" fill="#9a9a9a"/>
<path d="M1017 597v7l3.5-3.5z" fill="#9a9a9a"/>
<g font-family="Liberation Sans" font-size="11.5">
<text x="20" y="604" fill="#606060" textLength="44" lengthAdjust="spacingAndGlyphs">GOLD,H4</text>
<text x="86" y="604" fill="#000" textLength="74" lengthAdjust="spacingAndGlyphs">GBPJPY,Weekly</text>
</g>
<!-- terminal -->
<g shape-rendering="crispEdges">
<rect x="5" y="628" width="13" height="90" fill="url(#gSide)"/>
<rect x="19" y="614" width="1007" height="1" fill="#a0a0a0"/>
<rect x="19" y="614" width="1" height="84" fill="#a0a0a0"/>
<rect x="20" y="615" width="1005" height="82" fill="#ffffff"/>
<rect x="20" y="624" width="1005" height="10" fill="#f1f2f4"/>
<rect x="20" y="634" width="1005" height="1" fill="#d5d5d5"/>
<rect x="1025" y="614" width="1" height="84" fill="#e8e8e8"/>
<g fill="#d8d8d8">
<rect x="120" y="616" width="1" height="18"/><rect x="240" y="616" width="1" height="18"/><rect x="315" y="616" width="1" height="18"/><rect x="390" y="616" width="1" height="18"/><rect x="465" y="616" width="1" height="18"/>
</g>
<rect x="19" y="697" width="1007" height="1" fill="#000"/>
<rect x="19" y="698" width="1" height="20" fill="#a0a0a0"/>
<rect x="145" y="697" width="53" height="18" fill="#000"/>
<rect x="146" y="697" width="51" height="17" fill="#ffffff"/>
<rect x="4" y="718" width="1024" height="1" fill="#ffffff"/>
<rect x="4" y="720" width="1024" height="1" fill="#a0a0a0"/>
<rect x="4" y="721" width="1024" height="21" fill="#f0f0f0"/>
</g>
<path d="M8.5 617.5l5 5M13.5 617.5l-5 5" stroke="#000" stroke-width="1.8"/>
<g font-family="Liberation Sans" font-size="11" fill="#000">
<text x="29" y="629" textLength="14" lengthAdjust="spacingAndGlyphs">رمز</text>
<text x="129" y="629" textLength="17.5" lengthAdjust="spacingAndGlyphs">شرط</text>
<text x="265" y="629" textLength="44.5" lengthAdjust="spacingAndGlyphs">السعر الحالي</text>
<text x="375" y="629" textLength="9" lengthAdjust="spacingAndGlyphs">حد</text>
<text x="415" y="629" textLength="43.5" lengthAdjust="spacingAndGlyphs">زمن الإنتهاء</text>
<text x="474" y="629" textLength="17" lengthAdjust="spacingAndGlyphs">حدث</text>
</g>
<text transform="translate(15 715) rotate(-90)" font-family="Liberation Sans" font-size="10.5" fill="#5b6b82" textLength="57" lengthAdjust="spacingAndGlyphs">محطة طرفية</text>
<g font-family="Liberation Sans" font-size="12" fill="#6a6a6a">
<text x="31" y="711" textLength="23" lengthAdjust="spacingAndGlyphs">تجارة</text>
<text x="75" y="711" textLength="59" lengthAdjust="spacingAndGlyphs">تاريخ الحساب</text>
<text x="155" y="711" fill="#000" textLength="33" lengthAdjust="spacingAndGlyphs">تنبيهات</text>
<text x="209" y="711" textLength="60" lengthAdjust="spacingAndGlyphs">صندوق البريد</text>
<text x="289" y="711" textLength="53" lengthAdjust="spacingAndGlyphs">دفتر اليومية</text>
</g>
<g shape-rendering="crispEdges" fill="#6a6a6a">
<rect x="64" y="701" width="1" height="11"/><rect x="279" y="701" width="1" height="11"/><rect x="352" y="701" width="1" height="11"/>
</g>
<!-- status bar -->
<g shape-rendering="crispEdges" fill="#a0a0a0">
<rect x="262" y="723" width="1" height="17"/><rect x="379" y="723" width="1" height="17"/><rect x="489" y="723" width="1" height="17"/><rect x="567" y="723" width="1" height="17"/><rect x="642" y="723" width="1" height="17"/><rect x="718" y="723" width="1" height="17"/><rect x="795" y="723" width="1" height="17"/><rect x="866" y="723" width="1" height="17"/>
</g>
<g font-family="Liberation Sans" font-size="12" fill="#000">
<text x="5" y="737" textLength="76" lengthAdjust="spacingAndGlyphs">للساعدة، اضغط على</text><text x="83.5" y="737" textLength="10.5" lengthAdjust="spacingAndGlyphs">F1</text>
<text x="267" y="737" textLength="83" lengthAdjust="spacingAndGlyphs">Market Overview</text>
<text x="926.5" y="737" textLength="34.5" lengthAdjust="spacingAndGlyphs">50/0 kb</text>
</g>
<g shape-rendering="crispEdges">
<g fill="#5a7a10"><rect x="872" y="727" width="2" height="8"/><rect x="875" y="727" width="2" height="7"/><rect x="878" y="727" width="2" height="6"/><rect x="881" y="727" width="2" height="5"/><rect x="884" y="727" width="2" height="4"/><rect x="887" y="727" width="2" height="3"/><rect x="890" y="727" width="2" height="2"/><rect x="893" y="727" width="2" height="1"/></g>
<g fill="#1a3a6a"><rect x="872" y="737" width="2" height="2"/><rect x="875" y="735" width="2" height="4"/><rect x="878" y="734" width="2" height="5"/><rect x="881" y="733" width="2" height="6"/><rect x="884" y="732" width="2" height="7"/><rect x="887" y="731" width="2" height="8"/><rect x="890" y="730" width="2" height="9"/><rect x="893" y="729" width="2" height="10"/></g>
</g>
<path d="M1015 741l12-12M1019 741l8-8M1023 741l4-4" stroke="#a0a0a0" stroke-width="1"/>
<!-- taskbar -->
<rect x="4" y="742" width="1024" height="4" fill="url(#gTask)"/>
<rect x="4" y="742" width="1024" height="1" fill="#404040"/>
<ellipse cx="34" cy="750" rx="15" ry="8" fill="#a8c4e0" stroke="#1a2a3a" stroke-width="1.2"/>
<rect x="163" y="743" width="155" height="6" rx="2" fill="#222" />
<rect x="322" y="743" width="155" height="6" rx="2" fill="#8e8e8e" stroke="#c8c8c8"/>
<rect x="482" y="743" width="156" height="6" rx="2" fill="#8e8e8e" stroke="#c8c8c8"/>
</svg>

</body></html>
